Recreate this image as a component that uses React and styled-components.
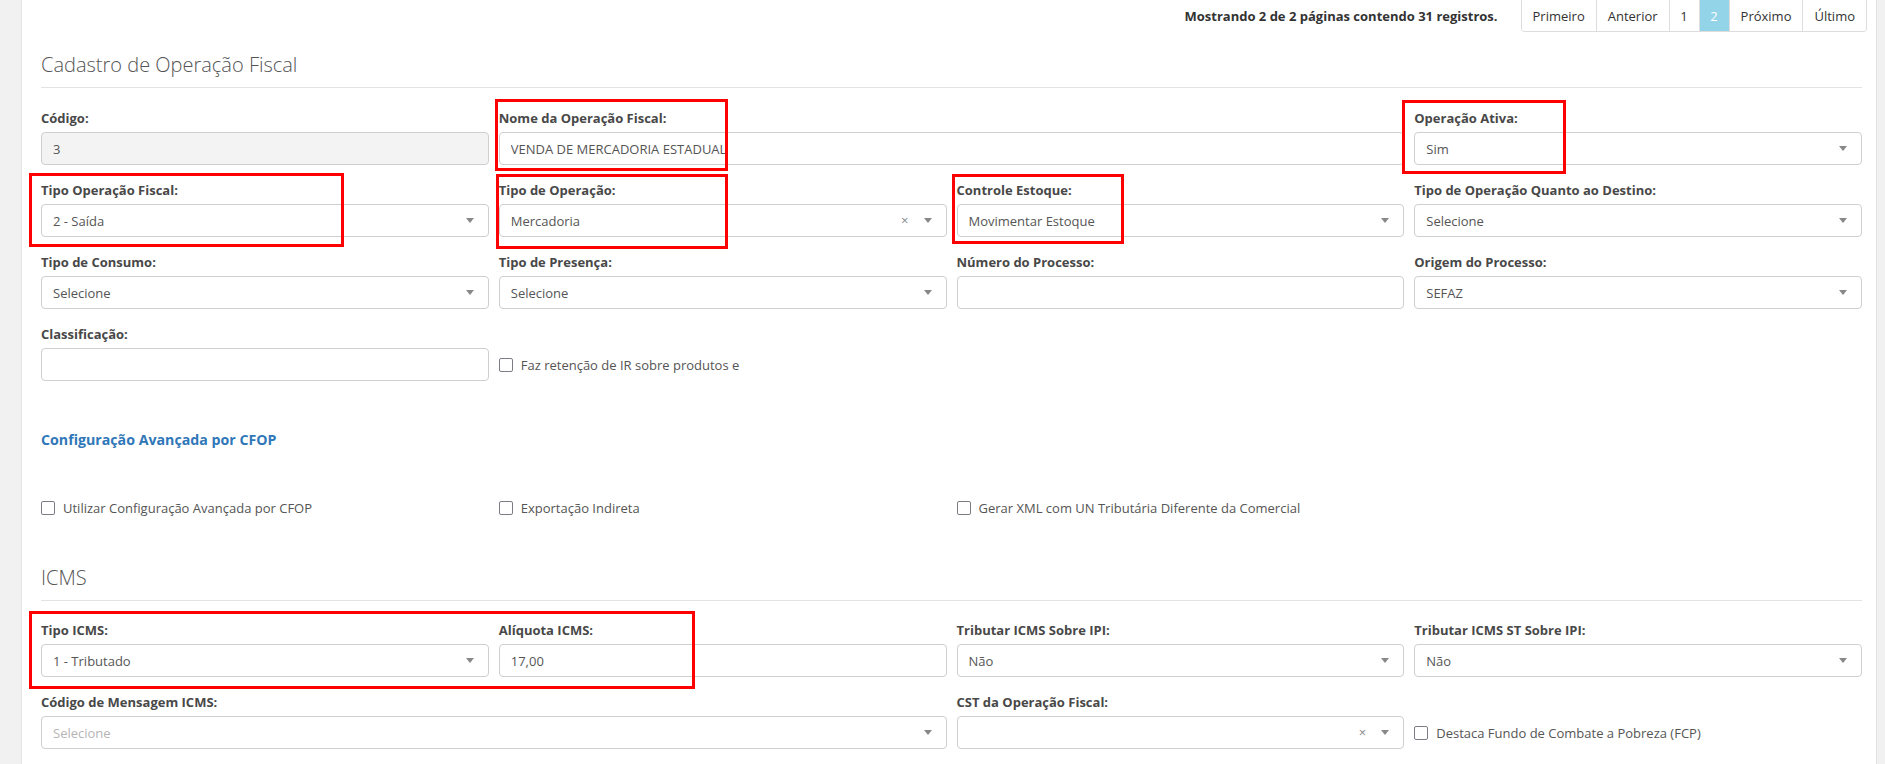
import React from 'react';
import styled, { createGlobalStyle } from 'styled-components';

const GlobalStyle = createGlobalStyle`
  html, body {
    margin: 0;
    padding: 0;
    background: #f1f1f1;
    font-family: "Open Sans", "Liberation Sans", sans-serif;
    color: #555;
  }
  * { box-sizing: border-box; }
`;

const Page = styled.div`
  position: relative;
  display: flex;
  min-height: 764px;
  padding: 0 8px 0 21px;
`;

const Panel = styled.div`
  flex: 1;
  background: #fff;
  border-left: 1px solid #e6e6e6;
  border-right: 1px solid #e0e0e0;
  padding: 0 9px 0 14px;
`;

const TopBar = styled.div`
  display: flex;
  justify-content: flex-end;
  align-items: center;
  gap: 23px;
  height: 32px;
`;

const Summary = styled.span`
  font-size: 13px;
  font-weight: 700;
  color: #333;
`;

const Pager = styled.div`
  display: flex;
  height: 32px;
  border: 1px solid #ddd;
  border-top: none;
  border-radius: 0 0 4px 4px;
  overflow: hidden;
`;

const PageItem = styled.span`
  display: flex;
  align-items: center;
  justify-content: center;
  padding: 0 ${p => (p.$narrow ? '0' : '11px')};
  width: ${p => (p.$narrow ? '30px' : 'auto')};
  font-size: 13px;
  color: ${p => (p.$active ? '#fff' : '#333')};
  background: ${p => (p.$active ? '#93d4e9' : '#fff')};
  border-left: ${p => (p.$first ? 'none' : '1px solid #ddd')};
`;

const SectionTitle = styled.h3`
  margin: ${p => p.$top}px 5px ${p => p.$bottom}px;
  padding-bottom: 8px;
  border-bottom: 1px solid #e3e3e3;
  font-size: 20px;
  line-height: 28px;
  font-weight: 300;
  color: #555;
`;

const Grid = styled.div`
  display: grid;
  grid-template-columns: repeat(4, 1fr);
  column-gap: 10px;
  margin: 0 5px;
`;

const Field = styled.div`
  grid-column: span ${p => p.$span || 1};
  margin-bottom: 16px;
`;

const Label = styled.label`
  display: block;
  font-size: 13px;
  line-height: 18px;
  font-weight: 700;
  color: #484848;
  margin-bottom: 5px;
  white-space: nowrap;
`;

const Control = styled.div`
  display: flex;
  align-items: center;
  height: 33px;
  padding: 0 14px 0 11px;
  border: 1px solid #cfcfcf;
  border-radius: 4px;
  background: ${p => (p.$disabled ? '#f3f3f3' : '#fff')};
  font-size: 13px;
  color: ${p => (p.$placeholder ? '#b5b5b5' : '#555')};
`;

const Value = styled.span`
  flex: 1;
  white-space: nowrap;
  overflow: hidden;
`;

const Clear = styled.span`
  font-size: 13px;
  color: #888;
  margin-right: 15px;
  line-height: 1;
`;

const Arrow = styled.span`
  width: 0;
  height: 0;
  border-left: 4px solid transparent;
  border-right: 4px solid transparent;
  border-top: 5px solid #888;
`;

const CheckCell = styled.div`
  grid-column: span ${p => p.$span || 1};
  display: flex;
  align-items: center;
  gap: 8px;
  height: ${p => (p.$inline ? '20px' : '33px')};
  margin-top: ${p => (p.$inline ? '0' : '23px')};
  margin-bottom: ${p => (p.$inline ? '0' : '16px')};
  font-size: 13px;
  color: #555;
  white-space: nowrap;
`;

const Box = styled.span`
  width: 14px;
  height: 14px;
  border: 1.5px solid #7c7c86;
  border-radius: 2px;
  background: #fff;
  flex-shrink: 0;
`;

const SubTitle = styled.div`
  margin: 33px 5px 0;
  font-size: 14.2px;
  line-height: 20px;
  font-weight: 700;
  color: #2f77b8;
`;

const CheckRow = styled(Grid)`
  margin-top: 48px;
`;

const Mark = styled.div`
  position: absolute;
  left: ${p => p.$x}px;
  top: ${p => p.$y}px;
  width: ${p => p.$w}px;
  height: ${p => p.$h}px;
  border: 3px solid #f00;
  pointer-events: none;
`;

const Select = ({ value, clear, placeholder }) => (
  <Control $placeholder={placeholder}>
    <Value>{value}</Value>
    {clear && <Clear>×</Clear>}
    <Arrow />
  </Control>
);

const Input = ({ value, disabled }) => (
  <Control $disabled={disabled}>
    <Value>{value}</Value>
  </Control>
);

const Check = ({ children, span, inline }) => (
  <CheckCell $span={span} $inline={inline}>
    <Box />
    {children}
  </CheckCell>
);

const marks = [
  { x: 495, y: 99, w: 233, h: 72 },
  { x: 1402, y: 100, w: 164, h: 74 },
  { x: 29, y: 173, w: 315, h: 74 },
  { x: 496, y: 174, w: 232, h: 75 },
  { x: 952, y: 174, w: 172, h: 70 },
  { x: 29, y: 611, w: 666, h: 78 },
];

export default function App() {
  return (
    <>
      <GlobalStyle />
      <Page>
        <Panel>
          <TopBar>
            <Summary>Mostrando 2 de 2 páginas contendo 31 registros.</Summary>
            <Pager>
              <PageItem $first>Primeiro</PageItem>
              <PageItem>Anterior</PageItem>
              <PageItem $narrow>1</PageItem>
              <PageItem $narrow $active>2</PageItem>
              <PageItem>Próximo</PageItem>
              <PageItem>Último</PageItem>
            </Pager>
          </TopBar>

          <SectionTitle $top={19} $bottom={21}>Cadastro de Operação Fiscal</SectionTitle>
          <Grid>
            <Field>
              <Label>Código:</Label>
              <Input value="3" disabled />
            </Field>
            <Field $span={2}>
              <Label>Nome da Operação Fiscal:</Label>
              <Input value="VENDA DE MERCADORIA ESTADUAL" />
            </Field>
            <Field>
              <Label>Operação Ativa:</Label>
              <Select value="Sim" />
            </Field>

            <Field>
              <Label>Tipo Operação Fiscal:</Label>
              <Select value="2 - Saída" />
            </Field>
            <Field>
              <Label>Tipo de Operação:</Label>
              <Select value="Mercadoria" clear />
            </Field>
            <Field>
              <Label>Controle Estoque:</Label>
              <Select value="Movimentar Estoque" />
            </Field>
            <Field>
              <Label>Tipo de Operação Quanto ao Destino:</Label>
              <Select value="Selecione" />
            </Field>

            <Field>
              <Label>Tipo de Consumo:</Label>
              <Select value="Selecione" />
            </Field>
            <Field>
              <Label>Tipo de Presença:</Label>
              <Select value="Selecione" />
            </Field>
            <Field>
              <Label>Número do Processo:</Label>
              <Input value="" />
            </Field>
            <Field>
              <Label>Origem do Processo:</Label>
              <Select value="SEFAZ" />
            </Field>

            <Field>
              <Label>Classificação:</Label>
              <Input value="" />
            </Field>
            <Check>Faz retenção de IR sobre produtos e</Check>
          </Grid>

          <SubTitle>Configuração Avançada por CFOP</SubTitle>
          <CheckRow>
            <Check inline>Utilizar Configuração Avançada por CFOP</Check>
            <Check inline>Exportação Indireta</Check>
            <Check inline>Gerar XML com UN Tributária Diferente da Comercial</Check>
          </CheckRow>

          <SectionTitle $top={46} $bottom={20}>ICMS</SectionTitle>
          <Grid>
            <Field>
              <Label>Tipo ICMS:</Label>
              <Select value="1 - Tributado" />
            </Field>
            <Field>
              <Label>Alíquota ICMS:</Label>
              <Input value="17,00" />
            </Field>
            <Field>
              <Label>Tributar ICMS Sobre IPI:</Label>
              <Select value="Não" />
            </Field>
            <Field>
              <Label>Tributar ICMS ST Sobre IPI:</Label>
              <Select value="Não" />
            </Field>

            <Field $span={2}>
              <Label>Código de Mensagem ICMS:</Label>
              <Select value="Selecione" placeholder />
            </Field>
            <Field>
              <Label>CST da Operação Fiscal:</Label>
              <Select value="" clear />
            </Field>
            <Check>Destaca Fundo de Combate a Pobreza (FCP)</Check>
          </Grid>
        </Panel>

        {marks.map((m, i) => (
          <Mark key={i} $x={m.x} $y={m.y} $w={m.w} $h={m.h} />
        ))}
      </Page>
    </>
  );
}
